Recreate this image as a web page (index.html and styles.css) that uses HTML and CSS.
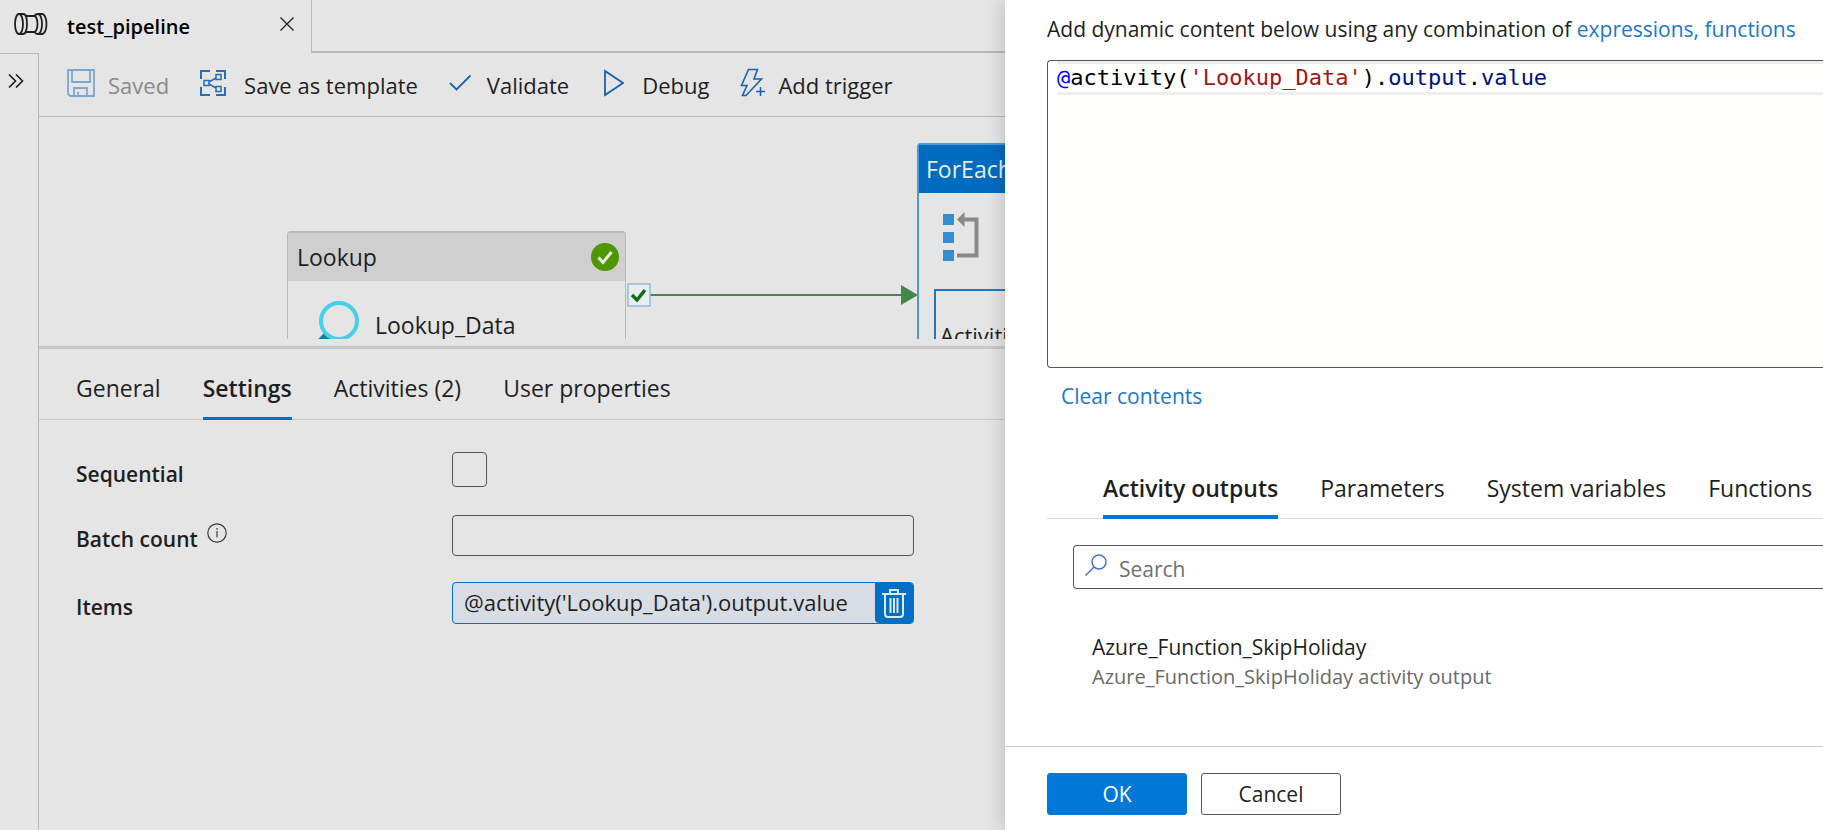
FILE: index.html
```html
<!DOCTYPE html>
<html lang="en">
<head>
<meta charset="utf-8">
<title>test_pipeline</title>
<link rel="stylesheet" href="styles.css">
</head>
<body>
<div class="app">
  <main class="workspace">
    <header class="tabstrip">
      <div class="doc-tab">
        <svg class="pipe-icon" width="36" height="24" viewBox="0 0 36 24" fill="none" stroke="#1f1f1f" stroke-width="1.8">
          <ellipse cx="6" cy="12" rx="4" ry="10"/>
          <path d="M6 2h4c2.500 0 4 4.500 4 10s-1.500 10-4 10H6M10 2c2 0 3.500 2 3.500 2h8s1-2 3.500-2h4c2.500 0 4.500 4.500 4.500 10s-2 10-4.500 10h-4c-2.500 0-3.500-2-3.500-2h-8s-1.500 2-3.500 2M22 4c2 2 2.500 4.500 2.500 8s-.5 6-2.500 8M25.500 2c2.500 1.500 3.500 5 3.500 10s-1 8.500-3.500 10"/>
        </svg>
        <span class="doc-name">test_pipeline</span>
        <button class="icon-btn" aria-label="Close tab">
          <svg width="14" height="14" viewBox="0 0 14 14" stroke="#1f1f1f" stroke-width="1.300"><path d="M.5.5l13 13M13.500.5l-13 13"/></svg>
        </button>
      </div>
      <div class="tab-fill"></div>
    </header>
    <div class="work-body">
      <aside class="rail">
        <button class="icon-btn" aria-label="Expand">
          <svg width="16" height="14" viewBox="0 0 16 14" fill="none" stroke="#1f1f1f" stroke-width="1.600"><path d="M1 .5L7.500 7 1 13.500M8 .5L14.500 7 8 13.500"/></svg>
        </button>
      </aside>
      <section class="editor-area">
        <nav class="toolbar">
          <button class="tool saved" disabled>
            <svg width="28" height="28" viewBox="0 0 28 28" fill="none" stroke="#7aa7d0" stroke-width="1.800"><path d="M1 1h26v26H3l-2-2zM5 1v12h18V1M7 27v-8h13v8M11 27v-4"/></svg>
            <span>Saved</span>
          </button>
          <button class="tool template">
            <svg width="26" height="26" viewBox="0 0 26 26" fill="none" stroke="#2a6cb5" stroke-width="2"><path d="M1 9V1h9M16 1h9v8M25 17v8h-9M10 25H1v-8"/><path stroke-width="1.500" d="M4 10.500h5v5H4zM16 4.500h5v5h-5zM16 16.500h5v5h-5zM9 12l7-4M9 14l7 4"/></svg>
            <span>Save as template</span>
          </button>
          <button class="tool validate">
            <svg width="22" height="18" viewBox="0 0 22 18" fill="none" stroke="#1a60b4" stroke-width="1.800"><path d="M1 9l6.500 6.500L21.500 1.500"/></svg>
            <span>Validate</span>
          </button>
          <button class="tool debug">
            <svg width="20" height="28" viewBox="0 0 20 28" fill="none" stroke="#1a60b4" stroke-width="1.800"><path d="M1 2v24l18-12z"/></svg>
            <span>Debug</span>
          </button>
          <button class="tool trigger">
            <svg width="26" height="30" viewBox="0 0 26 30" fill="none" stroke="#1a60b4" stroke-width="1.600"><path d="M8.500 1.500h9L14 11h7.500L6 27.500H2.500L7 17.500H1.500zM20.500 19v9M16 23.500h9"/></svg>
            <span>Add trigger</span>
          </button>
        </nav>
        <div class="canvas">
          <article class="node lookup">
            <header class="node-head">
              <span>Lookup</span>
              <svg width="28" height="28" viewBox="0 0 28 28"><circle cx="14" cy="14" r="14" fill="#4f9600"/><path d="M7.500 14.500l4.500 5L20.500 9" fill="none" stroke="#e8ece4" stroke-width="3"/></svg>
            </header>
            <div class="node-body">
              <svg width="42" height="46" viewBox="0 0 42 46"><path d="M7 32l8 6-8 8H-6z" fill="#1a7ba3"/><circle cx="22" cy="20" r="18" fill="#e5e5e5" stroke="#48d0e8" stroke-width="4"/></svg>
              <span>Lookup_Data</span>
            </div>
          </article>
          <svg class="link" width="292" height="24" viewBox="0 0 292 24">
            <path d="M22 12h253" stroke="#43874a" stroke-width="2"/>
            <path d="M274 2l17 10-17 10z" fill="#43874a"/>
            <rect x="1" y="1" width="22" height="22" fill="#e9edf0" stroke="#92bbdf" stroke-width="1.500"/>
            <path d="M5 12l5 5L18 7" fill="none" stroke="#0b7013" stroke-width="3.500"/>
          </svg>
          <article class="node foreach">
            <header class="node-head">ForEach</header>
            <svg class="loop-icon" width="37" height="49" viewBox="0 0 37 49"><g fill="#328dd1"><path d="M0 2h11v11H0zM0 20h11v11H0zM0 38h11v11H0z"/></g><path d="M18 7.500h15.500v36H14" fill="none" stroke="#8a8a8a" stroke-width="4"/><path d="M14 7.500L21.500 0v15z" fill="#8a8a8a"/></svg>
            <div class="inner">Activities</div>
          </article>
        </div>
        <section class="props">
          <div class="tabs" role="tablist">
            <button role="tab" class="tab">General</button>
            <button role="tab" class="tab active" aria-selected="true">Settings</button>
            <button role="tab" class="tab">Activities (2)</button>
            <button role="tab" class="tab">User properties</button>
          </div>
          <form class="form">
            <label for="seq">Sequential</label>
            <input id="seq" class="check" type="checkbox">
            <label for="batch">Batch count
              <svg class="info" width="20" height="20" viewBox="0 0 20 20" fill="none" stroke="#3c3c3c" stroke-width="1.200"><circle cx="10" cy="10" r="9.200"/><path d="M10 8v6.500M10 5v1.700"/></svg>
            </label>
            <input id="batch" class="field" type="text">
            <label for="items">Items</label>
            <div class="expr">
              <input id="items" type="text" value="@activity('Lookup_Data').output.value">
              <button type="button" class="trash" aria-label="Delete">
                <svg width="24" height="29" viewBox="0 0 24 29" fill="none" stroke="#dfe9f2" stroke-width="2"><path d="M0 5h24M8 4V1h8v3M3 5v20q0 3 3 3h12q3 0 3-3V5M8.500 9v15M12 9v15M15.500 9v15"/></svg>
              </button>
            </div>
          </form>
        </section>
      </section>
    </div>
  </main>
  <aside class="panel">
    <div class="panel-body">
      <p class="hint">Add dynamic content below using any combination of <a href="#">expressions, functions</a></p>
      <div class="code" role="textbox" aria-label="Expression" contenteditable="true" spellcheck="false"><div class="line"><span class="at">@</span>activity(<span class="str">'Lookup_Data'</span>).<span class="id">output</span>.<span class="id">value</span></div></div>
      <a class="clear" href="#">Clear contents</a>
      <div class="tabs panel-tabs" role="tablist">
        <button role="tab" class="tab active" aria-selected="true">Activity outputs</button>
        <button role="tab" class="tab">Parameters</button>
        <button role="tab" class="tab">System variables</button>
        <button role="tab" class="tab">Functions</button>
      </div>
      <label class="search">
        <svg width="22" height="22" viewBox="0 0 22 22" fill="none" stroke="#4a6ee0" stroke-width="1.500"><circle cx="14" cy="8" r="7"/><path d="M9 13l-8.500 8.500"/></svg>
        <input type="search" placeholder="Search" aria-label="Search">
      </label>
      <div class="result">
        <div class="result-name">Azure_Function_SkipHoliday</div>
        <div class="result-desc">Azure_Function_SkipHoliday activity output</div>
      </div>
    </div>
    <footer class="actions">
      <button class="btn primary">OK</button>
      <button class="btn">Cancel</button>
    </footer>
  </aside>
</div>
</body>
</html>
```
FILE: styles.css
```css
* { box-sizing: border-box; }
body {
  margin: 0;
  font-family: "Open Sans", "Noto Sans", sans-serif;
  font-size: 21px;
  line-height: 30px;
  color: #1f1f1f;
}
button, input { font: inherit; color: inherit; }
button { background: none; border: 0; padding: 0; }
svg { display: block; flex: none; }
a { color: #1a78cc; text-decoration: none; }

.app {
  display: grid;
  grid-template-columns: minmax(0, 1005fr) minmax(0, 818fr);
  min-height: 100vh;
  overflow: hidden;
}

.workspace { display: flex; flex-direction: column; background: #e5e5e5; overflow: hidden; }
.tabstrip { display: flex; height: 53px; }
.doc-tab { display: flex; align-items: center; width: 312px; padding: 0 17px 6px 13px; border-right: 1px solid #b8b8b8; }
.doc-name { margin: 6px auto 0 18px; color: #000; font-size: 20px; font-weight: 600; }
.icon-btn { display: flex; }
.tab-fill { flex: 1; border-bottom: 2px solid #b8b8b8; }

.work-body { display: flex; flex: 1; }
.rail { width: 39px; padding: 20px 8px; border-top: 1px solid #b8b8b8; border-right: 1px solid #b8b8b8; }
.editor-area { flex: 1; min-width: 0; }

.toolbar { display: flex; gap: 31px; height: 64px; padding: 0 28px; border-bottom: 1px solid #b8b8b8; font-size: 22px; }
.tool { display: flex; align-items: center; gap: 16px; padding-bottom: 4px; white-space: nowrap; }
.tool span { padding-top: 5px; }
.saved { color: #8a8a8a; gap: 13px; }
.template { gap: 18px; }
.debug { gap: 18px; padding-left: 4px; }
.trigger { gap: 12px; }

.canvas { position: relative; height: 222px; overflow: hidden; }
.node { position: absolute; font-size: 23px; }
.lookup { left: 248px; top: 114px; width: 339px; height: 160px; border: 1px solid #b8b8b8; border-top-width: 2px; border-radius: 4px; }
.node-head { display: flex; align-items: center; justify-content: space-between; height: 48px; padding: 0 6px 0 9px; background: #cfcfcf; }
.node-body { display: flex; gap: 16px; padding: 20px 29px; }
.node-body span { padding-top: 9px; }
.link { position: absolute; left: 588px; top: 166px; }
.foreach { left: 878px; top: 26px; width: 400px; height: 300px; border: 2px solid #4a98d8; border-radius: 4px; }
.foreach .node-head { background: #006cbf; color: #e5eef5; padding-left: 7px; }
.loop-icon { margin: 19px 0 0 24px; }
.inner { width: 300px; height: 100px; margin: 28px 0 0 15px; padding: 29px 4px; border: 2px solid #1a78cc; font-size: 22px; }

.props { margin-top: 7px; border-top: 3px solid #c8c8c8; }
.tabs { display: flex; gap: 42px; border-bottom: 1px solid #c8c8c8; white-space: nowrap; font-size: 23px; }
.props .tabs { height: 71px; padding-left: 37px; }
.tab { padding: 14px 0 5px; margin-bottom: -1px; border-bottom: 3px solid transparent; }
.tab.active { font-weight: 600; border-color: #0070c5; }

.form { display: grid; grid-template-columns: 376px minmax(0, 462px); row-gap: 26px; padding: 32px 37px; font-weight: 600; }
.form label { display: flex; align-items: center; gap: 9px; padding-top: 7px; }
.info { margin-bottom: 12px; }
.check { appearance: none; width: 35px; height: 35px; margin: 0; border: 1px solid #555; border-radius: 4px; }
.field { width: 100%; height: 41px; border: 1px solid #555; border-radius: 4px; background: transparent; }
.expr { display: flex; height: 42px; border: 1px solid #0070c5; border-radius: 4px; background: #d8dde5; overflow: hidden; }
.expr input { flex: 1; min-width: 0; padding: 0 11px 2px; border: 0; background: transparent; font-size: 22px; font-weight: 500; }
.trash { display: grid; place-items: center; width: 38px; background: #0070c5; border-bottom-left-radius: 4px; }

.panel { position: relative; display: flex; flex-direction: column; background: #fff; box-shadow: 0 0 20px rgba(0, 0, 0, .2); }
.panel-body { flex: 1; padding-left: 42px; }
.hint { margin: 14px 0 16px; white-space: nowrap; }
.code { height: 308px; padding-left: 9px; border: 1px solid #555; border-right: 0; border-radius: 4px 0 0 4px; background: #fffffe; font: 22px/28px "DejaVu Sans Mono", monospace; color: #000; }
.line { border: solid #eee; border-width: 3px 0; }
.at { color: #00f; }
.str { color: #a31515; }
.id { color: #001080; }
.clear { display: block; margin: 13px 14px 0; }
.panel-tabs { height: 66px; margin-top: 42px; padding-left: 56px; border-color: #ddd; }
.panel-tabs .tab { padding-top: 12px; border-bottom-width: 4px; }
.panel-tabs .active { border-color: #0078d7; }
.search { display: flex; align-items: center; gap: 12px; height: 44px; margin: 26px 0 0 26px; padding-left: 11px; border: 1px solid #555; border-right: 0; border-radius: 4px 0 0 4px; }
.search svg { margin-bottom: 4px; }
.search input { flex: 1; min-width: 0; border: 0; padding: 3px 0 0; background: transparent; outline: 0; }
.search input::placeholder { color: #707070; }
.result { margin: 43px 0 24px 45px; }
.result-desc { color: #6a6a6a; font-size: 20px; }
.actions { display: flex; gap: 14px; padding: 26px 42px 15px; border-top: 1px solid #ccc; }
.btn { width: 140px; height: 42px; border: 1px solid #555; border-radius: 3px; }
.primary { background: #0078d7; border-color: #0078d7; color: #fff; }
```
